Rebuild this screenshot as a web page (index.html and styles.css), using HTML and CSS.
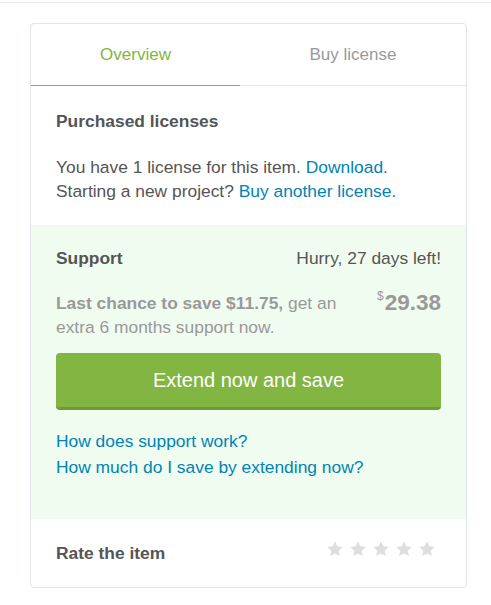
FILE: index.html
```html
<!DOCTYPE html>
<html>
<head>
<meta charset="utf-8">
<link rel="stylesheet" href="styles.css">
</head>
<body>
<div class="topbar"></div>
<div class="card">
  <div class="tabs">
    <div class="tab active">Overview</div>
    <div class="tab">Buy license</div>
  </div>
  <div class="section">
    <h3 class="heading">Purchased licenses</h3>
    <p class="text">You have 1 license for this item. <a href="#">Download</a>.<br>Starting a new project? <a href="#">Buy another license</a>.</p>
  </div>
  <div class="support">
    <div class="row">
      <span class="heading">Support</span>
      <span class="hurry">Hurry, 27 days left!</span>
    </div>
    <div class="offer">
      <p class="offer-text"><b>Last chance to save $11.75,</b> get an extra 6 months support now.</p>
      <div class="price"><sup class="cur">$</sup>29.38</div>
    </div>
    <button class="btn">Extend now and save</button>
    <div class="links">
      <a href="#">How does support work?</a>
      <a href="#">How much do I save by extending now?</a>
    </div>
  </div>
  <div class="rate">
    <span class="heading">Rate the item</span>
    <div class="stars">
      <svg viewBox="0 0 24 24"><path d="M12 1.8l3.1 6.6 7.2.9-5.3 5 1.4 7.1L12 17.9l-6.4 3.5 1.4-7.1-5.3-5 7.2-.9z"/></svg>
      <svg viewBox="0 0 24 24"><path d="M12 1.8l3.1 6.6 7.2.9-5.3 5 1.4 7.1L12 17.9l-6.4 3.5 1.4-7.1-5.3-5 7.2-.9z"/></svg>
      <svg viewBox="0 0 24 24"><path d="M12 1.8l3.1 6.6 7.2.9-5.3 5 1.4 7.1L12 17.9l-6.4 3.5 1.4-7.1-5.3-5 7.2-.9z"/></svg>
      <svg viewBox="0 0 24 24"><path d="M12 1.8l3.1 6.6 7.2.9-5.3 5 1.4 7.1L12 17.9l-6.4 3.5 1.4-7.1-5.3-5 7.2-.9z"/></svg>
      <svg viewBox="0 0 24 24"><path d="M12 1.8l3.1 6.6 7.2.9-5.3 5 1.4 7.1L12 17.9l-6.4 3.5 1.4-7.1-5.3-5 7.2-.9z"/></svg>
    </div>
  </div>
</div>
</body>
</html>
```
FILE: styles.css
```css
* { box-sizing: border-box; }
body {
  margin: 0;
  background: #fff;
  font-family: "Liberation Sans", Arial, sans-serif;
  font-size: 17.4px;
  line-height: 24px;
  color: #555;
}
.topbar {
  height: 3px;
  border-bottom: 1px solid #e3e9ee;
}
.card {
  margin: 20px 0 0 30px;
  width: 437px;
  border: 1px solid #dfe5ea;
  border-radius: 4px;
  overflow: hidden;
}
.tabs {
  display: flex;
  border-bottom: 1px solid #dfe5ea;
}
.tab {
  height: 62px;
  display: flex;
  align-items: center;
  justify-content: center;
  font-size: 17px;
  color: #999;
  flex: 1;
  margin-bottom: -1px;
  border-bottom: 1px solid transparent;
}
.tab.active {
  flex: 0 0 209px;
  color: #82b541;
  border-bottom-color: #82b541;
}
.section {
  padding: 23px 25px 22px;
}
.heading {
  margin: 0;
  font-size: 17.4px;
  font-weight: bold;
  line-height: 24px;
  color: #555;
}
.text {
  margin: 22px 0 0;
}
a {
  color: #0084b4;
  text-decoration: none;
}
.support {
  background: #f1fcf0;
  padding: 21px 25px 39px;
}
.row {
  display: flex;
  justify-content: space-between;
}
.hurry { color: #555; }
.offer {
  margin-top: 21px;
  display: flex;
  justify-content: space-between;
  align-items: flex-start;
}
.offer-text {
  margin: 0;
  width: 292px;
  color: #999;
}
.offer-text b { color: #999; }
.price {
  font-size: 22.5px;
  font-weight: bold;
  color: #999;
  line-height: 24px;
  white-space: nowrap;
}
.cur {
  font-size: 12px;
  font-weight: normal;
  vertical-align: top;
  line-height: 12px;
  position: relative;
  top: -1px;
  margin-right: 1px;
}
.btn {
  display: block;
  width: 100%;
  margin-top: 14px;
  height: 57px;
  border: 0;
  border-bottom: 3px solid #6f9a37;
  border-radius: 4px;
  background: #82b541;
  color: #fff;
  font-family: "Liberation Sans", Arial, sans-serif;
  font-size: 20px;
  padding: 0;
}
.links {
  margin-top: 18px;
  display: flex;
  flex-direction: column;
  line-height: 26px;
}
.links a { align-self: flex-start; }
.rate {
  padding: 22px 25px 22px;
  display: flex;
  justify-content: space-between;
  align-items: center;
}
.stars {
  display: flex;
  gap: 5px;
  margin-right: 5px;
  margin-top: -8px;
}
.stars svg {
  width: 18px;
  height: 18px;
  fill: #dedede;
}
```
